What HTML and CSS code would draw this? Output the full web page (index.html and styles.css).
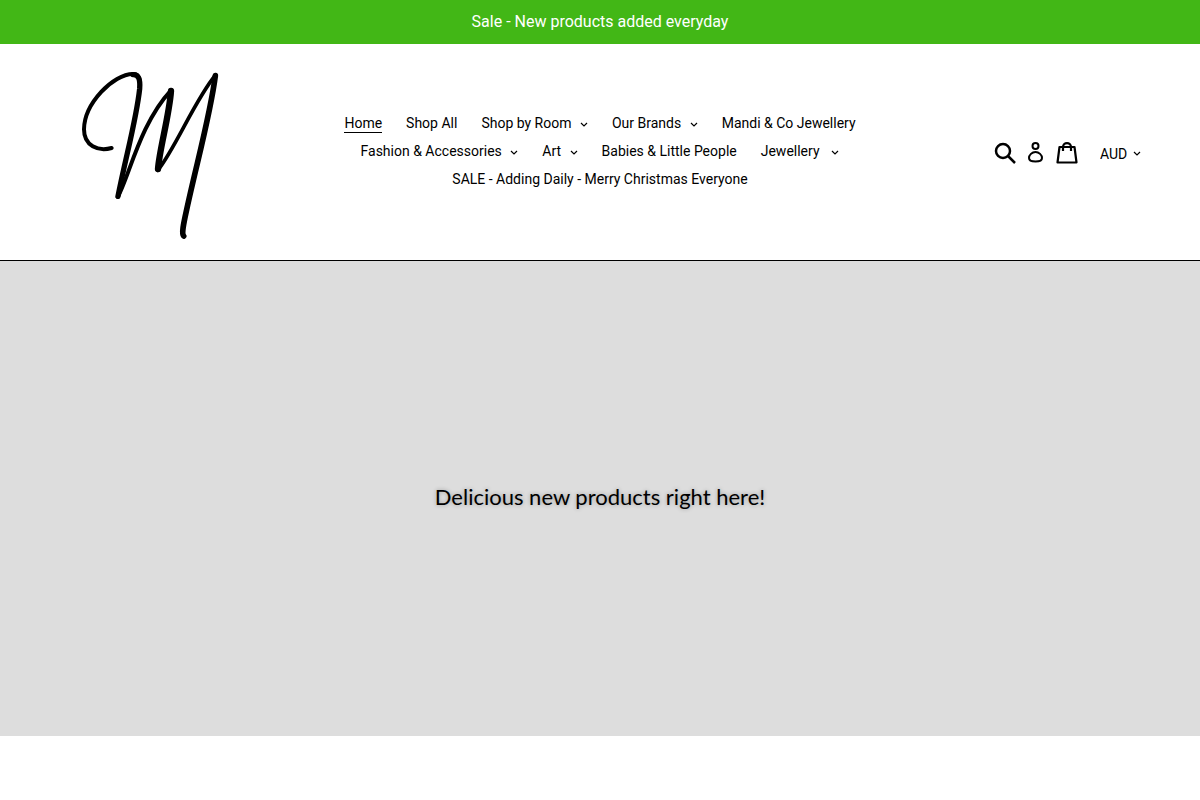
FILE: index.html
```html
<!DOCTYPE html>
<html lang="en">
<head>
    <meta charset="UTF-8">
    <meta name="viewport" content="width=device-width, initial-scale=1.0">
    <title>Home</title>
    <link rel="stylesheet" href="styles.css">
</head>
<body>
    <div class="announcement">
        <p>Sale - New products added everyday</p>
    </div>

    <header class="site-header">
        <a class="logo" href="#" aria-label="Home page">
            <svg viewBox="0 0 480 570" fill="none" stroke="#000" stroke-linecap="round" stroke-linejoin="round">
                <path stroke-width="12" d="M125 264C84 275 42 258 42 208C43 130 130 42 189 42C203 42 210 54 210 74"/>
                <path stroke-width="16" d="M189 44C207 43 211 60 209 86C199 180 167 290 144 409"/>
                <path stroke-width="12" d="M143 411C177 352 210 190 303 91"/>
                <path stroke-width="19" d="M303 93C298 165 268 270 264 327"/>
                <path stroke-width="11" d="M263 331C311 275 378 113 437 45"/>
                <path stroke-width="17" d="M436 47C422 160 380 310 350 449C341 490 334 520 341 528"/>
            </svg>
        </a>

        <nav class="site-nav">
            <ul>
                <li><a class="active" href="#">Home</a></li>
                <li><a href="#">Shop All</a></li>
                <li><button type="button">Shop by Room <svg class="chevron" viewBox="0 0 8 6"><path d="M1 1l3 3 3-3"/></svg></button></li>
                <li><button type="button">Our Brands <svg class="chevron" viewBox="0 0 8 6"><path d="M1 1l3 3 3-3"/></svg></button></li>
                <li><a href="#">Mandi &amp; Co Jewellery</a></li>
                <li><button type="button">Fashion &amp; Accessories <svg class="chevron" viewBox="0 0 8 6"><path d="M1 1l3 3 3-3"/></svg></button></li>
                <li><button type="button">Art <svg class="chevron" viewBox="0 0 8 6"><path d="M1 1l3 3 3-3"/></svg></button></li>
                <li><a href="#">Babies &amp; Little People</a></li>
                <li><button type="button">Jewellery&nbsp; <svg class="chevron" viewBox="0 0 8 6"><path d="M1 1l3 3 3-3"/></svg></button></li>
                <li><a href="#">SALE - Adding Daily - Merry Christmas Everyone</a></li>
            </ul>
        </nav>

        <div class="tools">
            <button class="icon-button" type="button" aria-label="Search">
                <svg class="icon" viewBox="0 0 22 24"><circle cx="9" cy="10" r="7"/><path d="M14 15l7 7"/></svg>
            </button>
            <a class="icon-button" href="#" aria-label="Log in">
                <svg class="icon icon-account" viewBox="0 0 16 24"><circle cx="7.5" cy="5" r="3"/><path d="M7.5 11C4 11 1 14 1 17C1 19.500 3.500 20.500 7.500 20.500S14 19.500 14 17C14 14 11 11 7.500 11Z"/></svg>
            </a>
            <a class="icon-button" href="#" aria-label="Cart">
                <svg class="icon icon-cart" viewBox="0 0 22 24"><path d="M3.5 6h15l2 15.500h-19zM7 10V6C7 .7 15 .7 15 6v4"/></svg>
            </a>
            <div class="currency">
                <select aria-label="Currency">
                    <option>AUD</option>
                </select>
                <svg class="chevron" viewBox="0 0 8 6"><path d="M1 1l3 3 3-3"/></svg>
            </div>
        </div>
    </header>

    <main>
        <section class="hero">
            <h2>Delicious new products right here!</h2>
        </section>
    </main>
</body>
</html>
```
FILE: styles.css
```css
* {
    box-sizing: border-box;
}
body {
    margin: 0;
    background-color: #fff;
    color: #000;
    font-family: Roboto, sans-serif;
    font-size: 14px;
}
a {
    color: inherit;
    text-decoration: none;
}
button, select {
    padding: 0;
    border: none;
    background: none;
    color: inherit;
    font: inherit;
    cursor: pointer;
}
.announcement {
    padding: 10px 24px;
    background-color: #42b716;
    color: #fff;
    text-align: center;
}
.announcement p {
    margin: 0;
    font-size: 16px;
    line-height: 24px;
}
.site-header {
    display: grid;
    grid-template-columns: 1fr 2fr 1fr;
    align-items: center;
    padding: 16px 55px 10px;
    border-bottom: 1px solid #000;
}
.logo {
    padding-left: 15px;
}
.logo svg {
    display: block;
    width: 160px;
}
.site-nav ul {
    display: flex;
    flex-wrap: wrap;
    justify-content: center;
    margin: 0;
    padding: 0 0 8px;
    list-style: none;
}
.site-nav li {
    padding: 4px 12px;
}
.site-nav a, .site-nav button {
    display: block;
    line-height: 20px;
    white-space: nowrap;
}
.site-nav .active {
    height: 20px;
    border-bottom: 1px solid #000;
}
.chevron {
    width: 8px;
    height: 6px;
    margin-left: 5px;
    fill: none;
    stroke: #000;
    stroke-width: 1.2;
}
.tools {
    display: flex;
    align-items: center;
    justify-content: flex-end;
    padding-bottom: 4px;
}
.icon-button {
    display: flex;
    margin-right: 12px;
}
.icon {
    display: block;
    width: 22px;
    height: 24px;
    fill: none;
    stroke: #000;
    stroke-width: 2.5;
    stroke-linejoin: round;
}
.icon-account {
    width: 16px;
    stroke-width: 2;
}
.icon-cart {
    stroke-width: 2.2;
}
.currency {
    display: flex;
    align-items: center;
    padding: 2px 4px 0 10px;
}
.currency select {
    appearance: none;
    line-height: 20px;
}
.hero {
    display: flex;
    align-items: center;
    justify-content: center;
    min-height: 475px;
    padding-bottom: 4px;
    background-color: #ddd;
}
.hero h2 {
    margin: 0;
    font-family: Lato, sans-serif;
    font-size: 22px;
    font-weight: 400;
    line-height: 32px;
    text-shadow: 0 0 4px rgba(0, 0, 0, 0.3);
}
```
